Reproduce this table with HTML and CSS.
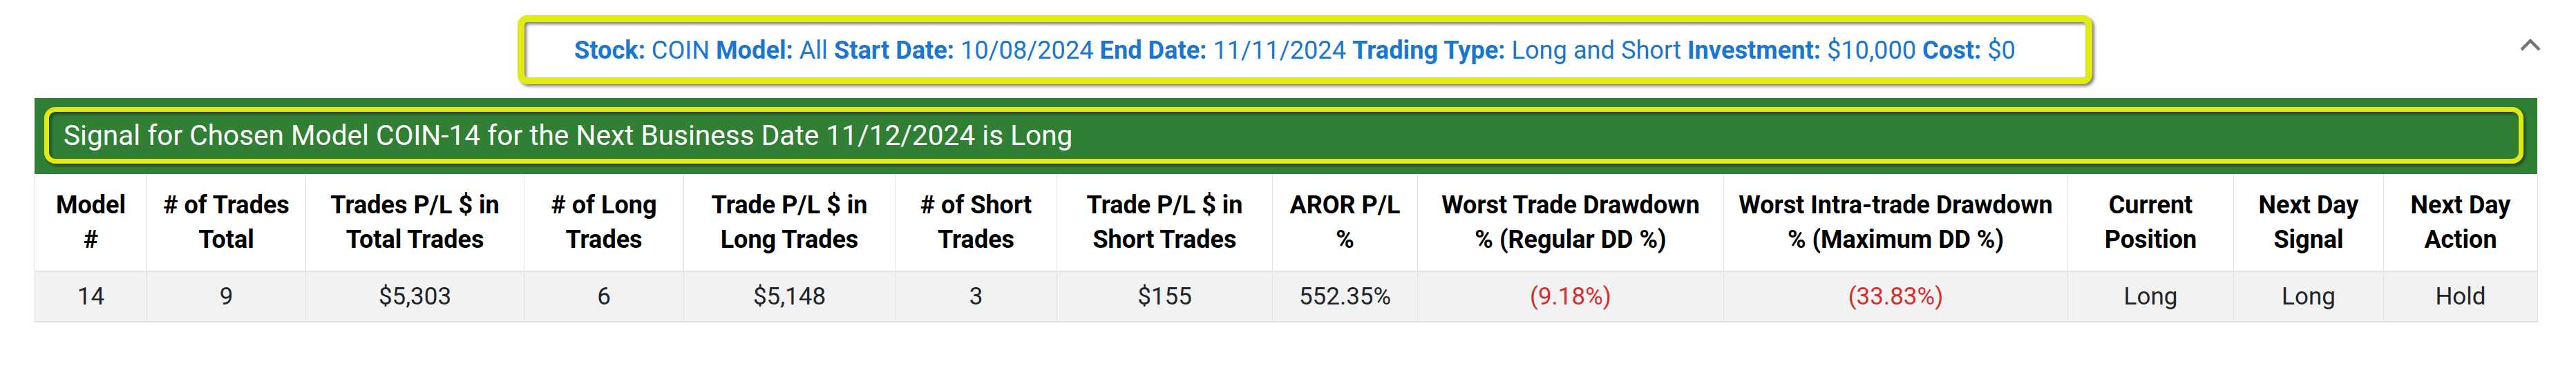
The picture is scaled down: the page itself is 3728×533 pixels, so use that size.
FILE: index.html
```html
<!DOCTYPE html>
<html lang="en">
<head>
<meta charset="utf-8">
<title>Signal</title>
<link rel="stylesheet" href="styles.css">
</head>
<body>
<div class="page">
  <div class="topbar">
    <div class="spacer"></div>
    <div class="summary">
      <span class="summary-text"><b>Stock:</b> COIN <b>Model:</b> All <b>Start Date:</b> 10/08/2024 <b>End Date:</b> 11/11/2024 <b>Trading Type:</b> Long and Short <b>Investment:</b> $10,000 <b>Cost:</b> $0</span>
    </div>
    <div class="caret-wrap">
      <svg class="caret" width="30" height="18" viewBox="0 0 30 18"><path d="M2 16 L15 3 L28 16" fill="none" stroke="#757575" stroke-width="4.5"/></svg>
    </div>
  </div>
  <div class="signal-bar">
    <div class="signal-box">Signal for Chosen Model COIN-14 for the Next Business Date 11/12/2024 is Long</div>
  </div>
  <table class="results">
    <colgroup>
      <col class="c1"><col class="c2"><col class="c3"><col class="c4"><col class="c5"><col class="c6"><col class="c7"><col class="c8"><col class="c9"><col class="c10"><col class="c11"><col class="c12"><col class="c13">
    </colgroup>
    <thead>
      <tr>
        <th>Model<br>#</th>
        <th># of Trades<br>Total</th>
        <th>Trades P/L $ in<br>Total Trades</th>
        <th># of Long<br>Trades</th>
        <th>Trade P/L $ in<br>Long Trades</th>
        <th># of Short<br>Trades</th>
        <th>Trade P/L $ in<br>Short Trades</th>
        <th>AROR P/L<br>%</th>
        <th>Worst Trade Drawdown<br>% (Regular DD %)</th>
        <th>Worst Intra-trade Drawdown<br>% (Maximum DD %)</th>
        <th>Current<br>Position</th>
        <th>Next Day<br>Signal</th>
        <th>Next Day<br>Action</th>
      </tr>
    </thead>
    <tbody>
      <tr>
        <td>14</td>
        <td>9</td>
        <td>$5,303</td>
        <td>6</td>
        <td>$5,148</td>
        <td>3</td>
        <td>$155</td>
        <td>552.35%</td>
        <td class="neg">(9.18%)</td>
        <td class="neg">(33.83%)</td>
        <td>Long</td>
        <td>Long</td>
        <td>Hold</td>
      </tr>
    </tbody>
  </table>
</div>
</body>
</html>
```

FILE: styles.css
```css
* { box-sizing: border-box; }
html, body { margin: 0; padding: 0; background: #ffffff; }
body { font-family: Roboto, "Liberation Sans", Arial, sans-serif; color: #212529; }

.page {
  width: 3728px;
  padding: 0 56px 0 50px;
}

.topbar {
  display: grid;
  grid-template-columns: 1fr auto 1fr;
  align-items: start;
  padding-top: 22px;
  height: 142px;
}

.summary {
  margin-left: 55px;
  width: 2279px;
  height: 100px;
  border: 10px solid #e2ea13;
  border-radius: 14px;
  box-shadow: 3px 3px 4px rgba(0, 0, 0, 0.5), inset 3px 3px 4px rgba(0, 0, 0, 0.5);
  display: flex;
  align-items: center;
  padding-left: 72px;
  background: #ffffff;
}

.summary-text {
  font-size: 36.2px;
  color: #1976d2;
  white-space: nowrap;
}
.summary-text b { font-weight: 700; }

.caret-wrap {
  display: flex;
  justify-content: flex-end;
  padding-top: 34px;
  margin-right: -5px;
}

.signal-bar {
  background: #317f34;
  height: 110px;
  padding: 13px 20px 15px 14px;
}

.signal-box {
  height: 82px;
  border: 7px solid #e2ea13;
  border-radius: 16px;
  box-shadow: 3px 3px 4px rgba(0, 0, 0, 0.45), inset 3px 3px 4px rgba(0, 0, 0, 0.45);
  display: flex;
  align-items: center;
  padding-left: 21px;
  color: #ffffff;
  font-size: 40.6px;
  white-space: nowrap;
}

.results {
  width: 3622px;
  table-layout: fixed;
  border-collapse: collapse;
  box-shadow: 0 8px 10px -4px rgba(0, 0, 0, 0.05);
}

.c1 { width: 162px; }
.c2 { width: 230px; }
.c3 { width: 316px; }
.c4 { width: 231px; }
.c5 { width: 306px; }
.c6 { width: 234px; }
.c7 { width: 312px; }
.c8 { width: 210px; }
.c9 { width: 443px; }
.c10 { width: 498px; }
.c11 { width: 240px; }
.c12 { width: 217px; }
.c13 { width: 223px; }

.results th, .results td {
  border: 1px solid #dee2e6;
  text-align: center;
  vertical-align: middle;
  padding: 0 4px;
}

.results th {
  height: 141px;
  font-size: 36px;
  line-height: 50px;
  font-weight: 700;
  color: #000000;
  background: #ffffff;
  border-top: 0;
  border-bottom: 2px solid #dee2e6;
}

.results td {
  height: 73px;
  font-size: 35px;
  font-weight: 400;
  color: #212529;
  background: #f2f2f2;
  border-bottom: 2px solid #dee2e6;
}

.results td.neg { color: #d32f2f; }
```
